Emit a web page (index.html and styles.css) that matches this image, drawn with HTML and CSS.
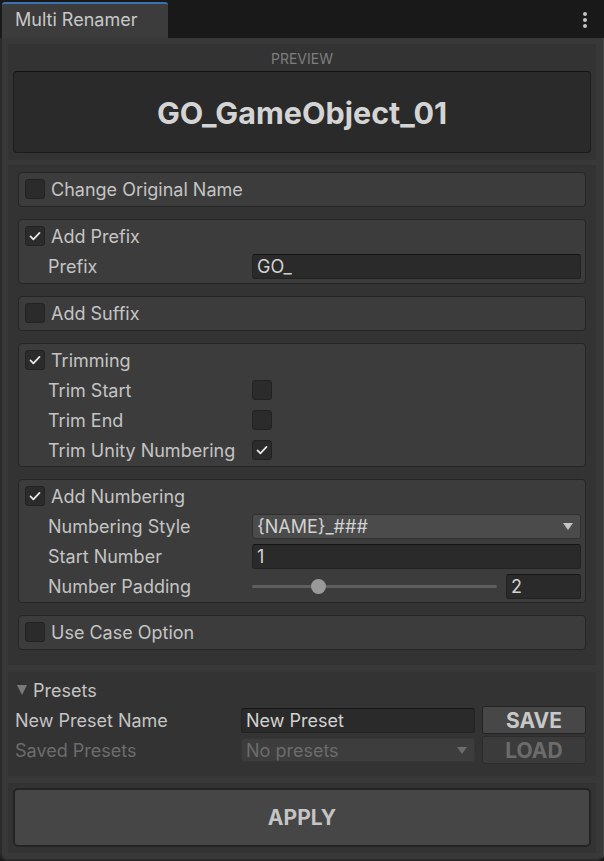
FILE: index.html
```html
<!DOCTYPE html>
<html>
<head>
<meta charset="utf-8">
<link rel="stylesheet" href="styles.css">
</head>
<body>
<div class="window">
  <div class="tabbar">
    <div class="tab">Multi Renamer</div>
    <div class="menu-dots"><span></span><span></span><span></span></div>
  </div>
  <div class="main">
    <div class="panel preview-panel">
      <div class="preview-label">PREVIEW</div>
      <div class="preview-box">GO_GameObject_01</div>
    </div>

    <div class="panel options-panel">
      <div class="section">
        <div class="row head"><span class="cb"></span><span class="head-label">Change Original Name</span></div>
      </div>

      <div class="section">
        <div class="row head"><span class="cb checked"><svg viewBox="0 0 20 20"><path d="M5 10.5l3.2 3.2L15 6.5"/></svg></span><span class="head-label">Add Prefix</span></div>
        <div class="row sub"><span class="sub-label">Prefix</span><div class="field">GO_</div></div>
      </div>

      <div class="section">
        <div class="row head"><span class="cb"></span><span class="head-label">Add Suffix</span></div>
      </div>

      <div class="section tall">
        <div class="row head"><span class="cb checked"><svg viewBox="0 0 20 20"><path d="M5 10.5l3.2 3.2L15 6.5"/></svg></span><span class="head-label">Trimming</span></div>
        <div class="row sub"><span class="sub-label">Trim Start</span><span class="cb"></span></div>
        <div class="row sub"><span class="sub-label">Trim End</span><span class="cb"></span></div>
        <div class="row sub"><span class="sub-label">Trim Unity Numbering</span><span class="cb checked"><svg viewBox="0 0 20 20"><path d="M5 10.5l3.2 3.2L15 6.5"/></svg></span></div>
      </div>

      <div class="section tall">
        <div class="row head"><span class="cb checked"><svg viewBox="0 0 20 20"><path d="M5 10.5l3.2 3.2L15 6.5"/></svg></span><span class="head-label">Add Numbering</span></div>
        <div class="row sub"><span class="sub-label">Numbering Style</span><div class="dropdown"><span>{NAME}_###</span><span class="arrow"></span></div></div>
        <div class="row sub"><span class="sub-label">Start Number</span><div class="field">1</div></div>
        <div class="row sub"><span class="sub-label">Number Padding</span>
          <div class="slider-wrap">
            <div class="slider"><div class="track"></div><div class="thumb"></div></div>
            <div class="field num">2</div>
          </div>
        </div>
      </div>

      <div class="section">
        <div class="row head"><span class="cb"></span><span class="head-label">Use Case Option</span></div>
      </div>
    </div>

    <div class="panel presets-panel">
      <div class="presets-head"><span class="tri"></span>Presets</div>
      <div class="preset-row">
        <span class="preset-label">New Preset Name</span>
        <div class="field preset-field">New Preset</div>
        <div class="btn">SAVE</div>
      </div>
      <div class="preset-row disabled">
        <span class="preset-label">Saved Presets</span>
        <div class="dropdown preset-field off"><span>No presets</span><span class="arrow"></span></div>
        <div class="btn off">LOAD</div>
      </div>
    </div>

    <div class="panel apply-panel">
      <div class="apply-btn">APPLY</div>
    </div>
  </div>
</div>
</body>
</html>
```
FILE: styles.css
```css
* { box-sizing: border-box; }
html, body { margin: 0; padding: 0; }
body {
  background: #191919;
  font-family: Inter, "Noto Sans", sans-serif;
  color: #c4c4c4;
  width: 604px;
  height: 861px;
  overflow: hidden;
}
.window {
  width: 604px;
  height: 861px;
  display: flex;
  flex-direction: column;
}
.tabbar {
  height: 38px;
  background: #191919;
  display: flex;
  align-items: flex-end;
  justify-content: space-between;
  flex: none;
  position: relative;
}
.tab {
  width: 166px;
  height: 36px;
  margin-left: 2px;
  background: #3c3c3c;
  border-top: 2px solid #3a72b0;
  border-radius: 3px 3px 0 0;
  font-size: 18px;
  line-height: 32px;
  padding-left: 13px;
  color: #c8c8c8;
}
.menu-dots {
  position: absolute;
  right: 17px;
  top: 12px;
  display: flex;
  flex-direction: column;
  gap: 2px;
}
.menu-dots span {
  width: 4px;
  height: 4px;
  border-radius: 50%;
  background: #c4c4c4;
}
.main {
  flex: 1;
  background: #383838;
  border-left: 2px solid #2a2a2a;
  border-right: 1px solid #4a4a4a;
  border-bottom: 2px solid #2a2a2a;
  border-radius: 0 0 7px 7px;
  padding: 6px 7px 6px 6px;
  display: flex;
  flex-direction: column;
  gap: 5px;
}
.panel {
  background: #333333;
}
.preview-panel {
  height: 116px;
  flex: none;
  padding: 0 5px;
}
.preview-label {
  height: 27px;
  line-height: 30px;
  text-align: center;
  font-size: 14px;
  color: #7e7e7e;
}
.preview-box {
  height: 82px;
  background: #2a2a2a;
  border: 1px solid #1c1c1c;
  border-top-color: #111;
  border-radius: 4px;
  display: flex;
  align-items: center;
  justify-content: center;
  font-size: 30.5px;
  font-weight: 700;
  color: #d4d4d4;
}
.options-panel {
  flex: none;
  padding: 7px 10px 15px;
  display: flex;
  flex-direction: column;
  gap: 12px;
}
.section {
  background: #3c3c3c;
  border: 1px solid #252525;
  border-radius: 4px;
  padding: 1px 4px 2px 6px;
}
.section.tall {
  padding-bottom: 1px;
}
.row {
  height: 30px;
  display: flex;
  align-items: center;
}
.head-label {
  margin-left: 6px;
  font-size: 18px;
}
.sub {
  padding-left: 23px;
}
.sub-label {
  width: 204px;
  flex: none;
  font-size: 18px;
}
.cb {
  width: 20px;
  height: 20px;
  flex: none;
  background: #2b2b2b;
  border: 1px solid #222;
  border-radius: 3px;
  display: flex;
  align-items: center;
  justify-content: center;
}
.cb svg {
  width: 18px;
  height: 18px;
  fill: none;
  stroke: #e6e6e6;
  stroke-width: 2;
  stroke-linecap: round;
  stroke-linejoin: round;
}
.field {
  flex: 1;
  height: 25px;
  background: #2a2a2a;
  border: 1px solid #222;
  border-top-color: #141414;
  border-radius: 3px;
  padding-left: 4px;
  font-size: 18px;
  line-height: 23px;
  color: #d2d2d2;
}
.dropdown {
  flex: 1;
  height: 25px;
  background: #4b4b4b;
  border: 1px solid #303030;
  border-radius: 3px;
  padding: 0 5px 0 4px;
  display: flex;
  align-items: center;
  justify-content: space-between;
  font-size: 18px;
  color: #d2d2d2;
}
.arrow {
  width: 0;
  height: 0;
  border-left: 5px solid transparent;
  border-right: 5px solid transparent;
  border-top: 7px solid #c4c4c4;
  margin-right: 2px;
}
.slider-wrap {
  flex: 1;
  display: flex;
  align-items: center;
  gap: 9px;
}
.slider {
  flex: 1;
  height: 16px;
  position: relative;
}
.track {
  position: absolute;
  left: 0;
  right: 0;
  top: 7px;
  height: 3px;
  background: #5e5e5e;
  border-radius: 2px;
}
.thumb {
  position: absolute;
  left: 59px;
  top: 1px;
  width: 15px;
  height: 15px;
  border-radius: 50%;
  background: #999999;
}
.field.num {
  flex: none;
  width: 75px;
}
.presets-panel {
  flex: none;
  height: 104px;
  padding: 3px 10px 0 7px;
  margin-top: 2px;
}
.presets-head {
  height: 30px;
  display: flex;
  align-items: center;
  font-size: 18px;
}
.tri {
  width: 0;
  height: 0;
  border-left: 5.5px solid transparent;
  border-right: 5.5px solid transparent;
  border-top: 10px solid #7a7a7a;
  margin: 0 6px 0 2px;
}
.preset-row {
  height: 30px;
  display: flex;
  align-items: center;
}
.preset-label {
  width: 226px;
  flex: none;
  font-size: 18px;
}
.preset-field {
  flex: none;
  width: 234px;
}
.btn {
  margin-left: 7px;
  flex: 1;
  height: 28px;
  background: #474747;
  border: 1px solid #242424;
  border-radius: 3px;
  display: flex;
  align-items: center;
  justify-content: center;
  font-size: 21px;
  font-weight: 700;
  color: #c8c8c8;
}
.disabled .preset-label { color: #6c6c6c; }
.dropdown.off {
  background: #3d3d3d;
  border-color: #363636;
  color: #6c6c6c;
  height: 24px;
}
.dropdown.off .arrow { border-top-color: #6c6c6c; }
.btn.off {
  background: #3b3b3b;
  border-color: #2c2c2c;
  color: #6c6c6c;
}
.apply-panel {
  flex: 1;
  padding: 5px 5px 6px;
  margin-top: 2px;
  display: flex;
  flex-direction: column;
}
.apply-btn {
  flex: 1;
  background: #464646;
  border: 2px solid #242424;
  border-radius: 5px;
  display: flex;
  align-items: center;
  justify-content: center;
  font-size: 21px;
  font-weight: 700;
  color: #c4c4c4;
}
```
